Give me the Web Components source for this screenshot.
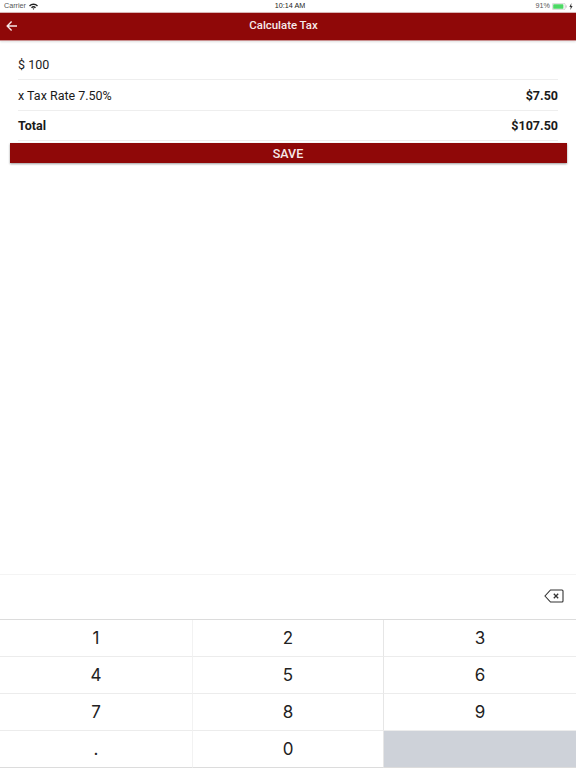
<!DOCTYPE html>
<html>
<head>
<meta charset="utf-8">
<title>Calculate Tax</title>
<style>
  html, body { margin: 0; height: 768px; overflow: hidden; background: #fff; }
  body { display: flex; flex-direction: column; font-family: Roboto, "Liberation Sans", sans-serif; }
  tax-form { flex: 1; }
</style>
</head>
<body>
<status-bar></status-bar>
<nav-bar>Calculate Tax</nav-bar>
<tax-form>
  <tax-row>$ 100</tax-row>
  <tax-row value="$7.50" tall>x Tax Rate 7.50%</tax-row>
  <tax-row value="$107.50" strong>Total</tax-row>
  <save-button>SAVE</save-button>
</tax-form>
<num-pad></num-pad>

<script>
class StatusBar extends HTMLElement {
    constructor(){
        super();
        this.attachShadow({mode: "open"}).innerHTML = `
        <style>
            :host{
                display: grid;
                grid-template-columns: 1fr auto 1fr;
                align-items: center;
                height: 12px;
                padding: 0 3px 0 4px;
                font: 7.2px/12px "Liberation Sans", sans-serif;
                color: #555;
            }
            .left{ display: flex; align-items: center; gap: 3px; }
            .time{ color: #222; margin-left: 3px; }
            .right{ display: flex; align-items: center; justify-content: flex-end; gap: 2px; }
            svg{ display: block; }
        </style>
        <div class="left">
            <span>Carrier</span>
            <svg width="9" height="7" viewBox="0 0 9 7">
                <path d="M0 2.4 A6.4 6.4 0 0 1 9 2.4 L8 3.4 A5 5 0 0 0 1 3.4 Z" fill="#222"/>
                <path d="M2 4.2 A3.6 3.6 0 0 1 7 4.2 L6 5.2 A2.2 2.2 0 0 0 3 5.2 Z" fill="#222"/>
                <path d="M3.6 5.8 A1.3 1.3 0 0 1 5.4 5.8 L4.5 6.8 Z" fill="#222"/>
            </svg>
        </div>
        <span class="time">10:14 AM</span>
        <div class="right">
            <span>91%</span>
            <svg width="15" height="7" viewBox="0 0 15 7">
                <rect x="0.3" y="0.3" width="12.8" height="6.4" rx="1.4" fill="none" stroke="#bbb" stroke-width=".6"/>
                <rect x="1.2" y="1.2" width="10.2" height="4.6" rx=".6" fill="#4cd964"/>
                <rect x="13.6" y="2.4" width="1" height="2.2" fill="#bbb"/>
            </svg>
            <svg width="4" height="7" viewBox="0 0 4 7"><path d="M2.4 0 L0.4 3.9 H1.7 L1.4 7 L3.6 3 H2.2 Z" fill="#333"/></svg>
        </div>
        `;
    }
}

class NavBar extends HTMLElement {
    constructor(){
        super();
        this.attachShadow({mode: "open"}).innerHTML = `
        <style>
            :host{
                display: flex;
                align-items: center;
                justify-content: center;
                position: relative;
                box-sizing: border-box;
                height: 29px;
                margin-bottom: 9px;
                padding: 0 9px 3px 0;
                background: #8f0808;
                border-top: 1px solid #d9b5b5;
                border-bottom: 1px solid #c98f8f;
                box-shadow: 0 1px 2px rgba(0,0,0,.12);
                font: 500 11.4px Roboto, sans-serif;
                color: #f6eaea;
            }
            svg{ position: absolute; left: 6px; top: 7px; }
        </style>
        <svg width="12" height="12" viewBox="0 0 12 12" fill="none" stroke="#f6e6e6" stroke-width="1.4">
            <path d="M11 6 H1.6 M5.6 1.6 L1.2 6 L5.6 10.4"/>
        </svg>
        <slot></slot>
        `;
    }
}

class TaxRow extends HTMLElement {
    constructor(){
        super();
        this.attachShadow({mode: "open"});
    }
    connectedCallback(){
        const value = this.getAttribute("value") || "";
        this.shadowRoot.innerHTML = `
        <style>
            :host{
                display: flex;
                justify-content: space-between;
                align-items: center;
                height: 29px;
                margin: 0 18px;
                border-bottom: 1px solid #eeeeee;
                font: 400 12.5px Roboto, sans-serif;
                color: #1a1a1a;
            }
            :host([tall]){ height: 30px; }
            :host([strong]) .label{ font-weight: 700; }
            .value{ font-weight: 700; }
        </style>
        <span class="label"><slot></slot></span>
        <span class="value">${value}</span>
        `;
    }
}

class TaxForm extends HTMLElement {
    constructor(){
        super();
        this.attachShadow({mode: "open"}).innerHTML = `
        <style>
            :host{ display: block; }
        </style>
        <slot></slot>
        `;
    }
}

class SaveButton extends HTMLElement {
    constructor(){
        super();
        this.attachShadow({mode: "open"}).innerHTML = `
        <style>
            :host{
                display: flex;
                align-items: center;
                justify-content: center;
                height: 20px;
                margin: 2px 9.5px 0;
                background: #8f0808;
                box-shadow: 0 1px 2px rgba(0,0,0,.4);
                font: 500 12.5px Roboto, sans-serif;
                color: #f6eaea;
            }
        </style>
        <slot></slot>
        `;
    }
}

class NumPad extends HTMLElement {
    constructor(){
        super();
        const keys = ["1","2","3","4","5","6","7","8","9",".","0",""];
        this.attachShadow({mode: "open"}).innerHTML = `
        <style>
            :host{ display: block; }
            .entry{
                display: flex;
                align-items: center;
                justify-content: flex-end;
                box-sizing: border-box;
                height: 46px;
                padding: 0 12px 2px 0;
                border-top: 1px solid #f4f4f4;
                border-bottom: 1px solid #dcdcdc;
            }
            .keys{
                display: grid;
                grid-template-columns: repeat(3, 192px);
                grid-auto-rows: 37px;
            }
            .key{
                display: flex;
                align-items: center;
                justify-content: center;
                box-sizing: border-box;
                border-bottom: 1px solid #ececec;
                font: 17px "Inter", "Liberation Sans", sans-serif;
                color: #222;
            }
            .key:nth-child(3n+2){ border-left: 1px solid #f2f2f2; border-right: 1px solid #e6e6e6; }
            .key.blank{ background: #ced2d9; }
            .key:nth-last-child(-n+3){ border-bottom-color: #dcdcdc; }
            svg{ display: block; }
        </style>
        <div class="entry">
            <svg width="20" height="14" viewBox="0 0 20 14" fill="none" stroke="#333" stroke-width="1.1">
                <path d="M6.5 1 H18 a1 1 0 0 1 1 1 V12 a1 1 0 0 1 -1 1 H6.5 L1 7 Z"/>
                <path d="M9.8 4.8 L14.2 9.2 M14.2 4.8 L9.8 9.2" stroke-width="1.3"/>
            </svg>
        </div>
        <div class="keys">
            ${keys.map(k => `<div class="key${k ? "" : " blank"}">${k}</div>`).join("")}
        </div>
        `;
    }
}

customElements.define("status-bar", StatusBar);
customElements.define("nav-bar", NavBar);
customElements.define("tax-row", TaxRow);
customElements.define("tax-form", TaxForm);
customElements.define("save-button", SaveButton);
customElements.define("num-pad", NumPad);
</script>
</body>
</html>
